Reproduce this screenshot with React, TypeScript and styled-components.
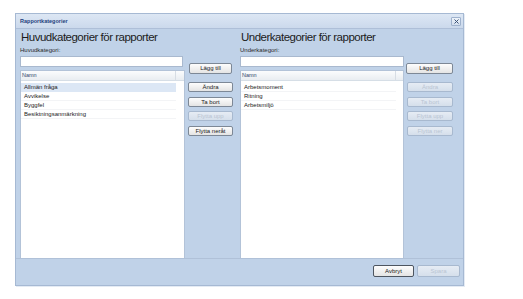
import styled, { createGlobalStyle } from "styled-components";

const GlobalStyle = createGlobalStyle`
  html, body {
    margin: 0;
    padding: 0;
    background: #ffffff;
    font-family: "Liberation Sans", Arial, sans-serif;
  }
`;

const Page = styled.div`
  width: 523px;
  height: 299px;
  padding: 13px 0 0 15px;
  box-sizing: border-box;
`;

const Dialog = styled.div`
  width: 449px;
  height: 273px;
  box-sizing: border-box;
  display: flex;
  flex-direction: column;
  background: #c0d2e8;
  border: 1px solid #a6b9d3;
  box-shadow: 1px 1px 0 #e4ebf4;
`;

const TitleBar = styled.div`
  height: 15px;
  flex: none;
  display: flex;
  align-items: center;
  justify-content: space-between;
  padding: 0 2px 0 4px;
  box-sizing: border-box;
  background: linear-gradient(#dde7f4, #cbd9ec);
  border-bottom: 1px solid #aebfd8;
`;

const Title = styled.span`
  font-size: 5.5px;
  font-weight: bold;
  color: #1f3f7c;
`;

const CloseButton = styled.div`
  width: 8px;
  height: 7px;
  display: flex;
  align-items: center;
  justify-content: center;
  border: 1px solid #9fb2cd;
  border-radius: 1px;
  background: linear-gradient(#eef3f9, #d2deee);
`;

const Body = styled.div`
  flex: 1;
  display: flex;
  padding: 1px 3px 0 4px;
  min-height: 0;
`;

const Section = styled.div<{ listWidth: number; sideWidth: number }>`
  display: grid;
  grid-template-columns: ${(p) => p.listWidth}px ${(p) => p.sideWidth}px;
  grid-template-rows: 15px 11px 11px 1fr;
`;

const Heading = styled.h2`
  grid-column: 1 / span 2;
  margin: 0;
  padding-left: 1px;
  font-size: 11.5px;
  font-weight: normal;
  letter-spacing: -0.5px;
  line-height: 15px;
  color: #1b1b1b;
`;

const FieldLabel = styled.label`
  grid-column: 1 / span 2;
  font-size: 6px;
  line-height: 10px;
  color: #2a2a2a;
`;

const TextInput = styled.div<{ trim: number }>`
  height: 11px;
  margin-right: ${(p) => p.trim}px;
  box-sizing: border-box;
  background: #ffffff;
  border: 1px solid #a9b9cf;
`;

const Button = styled.button<{ disabled?: boolean; w: number; dark?: boolean }>`
  width: ${(p) => p.w}px;
  height: 10px;
  padding: 0;
  box-sizing: border-box;
  font-family: "Liberation Sans", Arial, sans-serif;
  font-size: 6px;
  line-height: 8px;
  color: ${(p) => (p.disabled ? "#b9c4d2" : "#1a1a1a")};
  background: ${(p) =>
    p.disabled
      ? "linear-gradient(#e6ecf4, #d5dfeb)"
      : "linear-gradient(#fdfdfd, #e4e4e4)"};
  border: 1px solid
    ${(p) => (p.disabled ? "#a8b9cf" : p.dark ? "#4d5560" : "#7d8896")};
  border-radius: 2px;
`;

const AddButton = styled(Button)<{ shift: number }>`
  height: 11px;
  margin-left: ${(p) => p.shift}px;
`;

const List = styled.div`
  margin-top: 3px;
  background: #ffffff;
  border: 1px solid #b3c3d8;
  border-bottom: none;
  display: flex;
  flex-direction: column;
`;

const ListHeader = styled.div`
  height: 9px;
  display: grid;
  grid-template-columns: 155px 1fr;
  background: linear-gradient(#fbfcfd, #e9edf1);
  border-bottom: 1px solid #d6dee6;
`;

const HeaderCell = styled.div`
  font-size: 5.5px;
  line-height: 9px;
  padding-left: 1px;
  color: #34496b;
  border-right: 1px solid #d7dde4;
`;

const Row = styled.div<{ selected?: boolean }>`
  width: 155px;
  height: 9px;
  box-sizing: border-box;
  padding-left: 3px;
  font-size: 6px;
  line-height: 9px;
  color: #1b1b1b;
  background: ${(p) => (p.selected ? "#dce7f5" : "transparent")};
  border-bottom: 1px solid ${(p) => (p.selected ? "#dce7f5" : "#f3f4f6")};
`;

const Rows = styled.div`
  padding-top: 2px;
`;

const SideButtons = styled.div`
  margin-top: 3px;
  padding: 12px 0 0 3px;
  display: flex;
  flex-direction: column;
  gap: 4.5px;
`;

const Footer = styled.div`
  height: 27px;
  flex: none;
  display: flex;
  justify-content: flex-end;
  align-items: flex-start;
  gap: 3px;
  padding: 6px 3px 0 0;
  box-sizing: border-box;
  border-top: 1px solid #b0c1d8;
`;

const FooterButton = styled(Button)`
  height: 12px;
`;

const mainItems = ["Allmän fråga", "Avvikelse", "Byggfel", "Besiktningsanmärkning"];
const subItems = ["Arbetsmoment", "Ritning", "Arbetsmiljö"];

const App = () => {
  return (
    <Page>
      <GlobalStyle />
      <Dialog>
        <TitleBar>
          <Title>Rapportkategorier</Title>
          <CloseButton>
            <svg width="5" height="5" viewBox="0 0 5 5">
              <path d="M0.5 0.5 L4.5 4.5 M4.5 0.5 L0.5 4.5" stroke="#3b5376" strokeWidth="1" />
            </svg>
          </CloseButton>
        </TitleBar>
        <Body>
          <Section listWidth={165} sideWidth={55}>
            <Heading>Huvudkategorier för rapporter</Heading>
            <FieldLabel>Huvudkategori:</FieldLabel>
            <TextInput trim={2} />
            <div>
              <AddButton w={43} shift={4}>
                Lägg till
              </AddButton>
            </div>
            <List>
              <ListHeader>
                <HeaderCell>Namn</HeaderCell>
                <div />
              </ListHeader>
              <Rows>
                {mainItems.map((item, i) => (
                  <Row key={item} selected={i === 0}>
                    {item}
                  </Row>
                ))}
              </Rows>
            </List>
            <SideButtons>
              <Button w={45}>Ändra</Button>
              <Button w={45}>Ta bort</Button>
              <Button w={45} disabled>
                Flytta upp
              </Button>
              <Button w={45}>Flytta neråt</Button>
            </SideButtons>
          </Section>
          <Section listWidth={164} sideWidth={56}>
            <Heading>Underkategorier för rapporter</Heading>
            <FieldLabel>Underkategori:</FieldLabel>
            <TextInput trim={0} />
            <div>
              <AddButton w={47} shift={2}>
                Lägg till
              </AddButton>
            </div>
            <List>
              <ListHeader>
                <HeaderCell>Namn</HeaderCell>
                <div />
              </ListHeader>
              <Rows>
                {subItems.map((item) => (
                  <Row key={item}>{item}</Row>
                ))}
              </Rows>
            </List>
            <SideButtons>
              <Button w={46} disabled>
                Ändra
              </Button>
              <Button w={46} disabled>
                Ta bort
              </Button>
              <Button w={46} disabled>
                Flytta upp
              </Button>
              <Button w={46} disabled>
                Flytta ner
              </Button>
            </SideButtons>
          </Section>
        </Body>
        <Footer>
          <FooterButton w={41} dark>
            Avbryt
          </FooterButton>
          <FooterButton w={43} disabled>
            Spara
          </FooterButton>
        </Footer>
      </Dialog>
    </Page>
  );
};

export default App;
